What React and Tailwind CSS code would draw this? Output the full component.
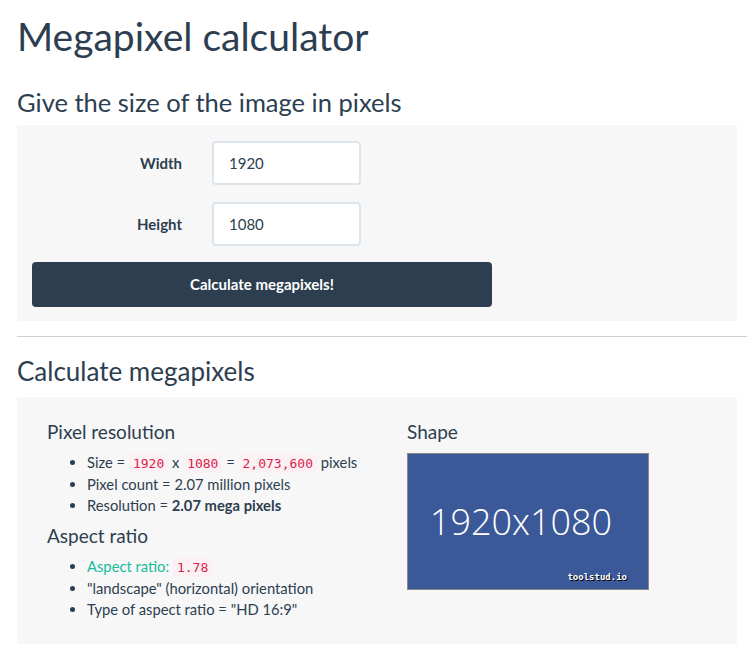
import React, { useState } from 'react';

const Code = ({ children }) => (
  <code className="rounded-[4px] bg-[#fbf0f3] px-[4px] py-[2px] font-['DejaVu_Sans_Mono',monospace] text-[13px] text-[#dc1d4b]">
    {children}
  </code>
);

export default function App() {
  const [width, setWidth] = useState('1920');
  const [height, setHeight] = useState('1080');

  return (
    <div className="min-h-screen bg-white font-['Lato','Open_Sans',sans-serif] text-[#2c3e50]">
      <div className="pl-[17px]">
        <h1 className="pt-[12px] text-[39px] leading-[48px]">Megapixel calculator</h1>
        <h3 className="mt-[26px] text-[25.5px] leading-[32px]">Give the size of the image in pixels</h3>

        {/* input panel */}
        <div className="mr-[10px] mt-[7px] bg-[#f7f7f7] pb-[14px] pt-[16px]">
          <div className="flex items-center">
            <label className="w-[180px] pr-[15px] text-right text-[15px] font-bold">Width</label>
            <input
              value={width}
              onChange={(e) => setWidth(e.target.value)}
              className="ml-[15px] h-[44px] w-[149px] rounded-[4px] border-2 border-[#dce4ec] bg-white px-[15px] text-[15px] text-[#2c3e50] outline-none"
            />
          </div>
          <div className="mt-[17px] flex items-center">
            <label className="w-[180px] pr-[15px] text-right text-[15px] font-bold">Height</label>
            <input
              value={height}
              onChange={(e) => setHeight(e.target.value)}
              className="ml-[15px] h-[44px] w-[149px] rounded-[4px] border-2 border-[#dce4ec] bg-white px-[15px] text-[15px] text-[#2c3e50] outline-none"
            />
          </div>
          <button className="ml-[15px] mt-[16px] h-[45px] w-[460px] rounded-[4px] bg-[#2c3e50] text-[15px] font-bold text-white">
            Calculate megapixels!
          </button>
        </div>

        <hr className="mt-[15px] border-t border-[#d0d0d0]" />

        <h3 className="mt-[18px] text-[26px] leading-[32px]">Calculate megapixels</h3>

        {/* results panel */}
        <div className="mr-[10px] mt-[10px] grid grid-cols-2 bg-[#f7f7f7] pb-[24px] pt-[23px]">
          <div className="pl-[30px]">
            <h4 className="text-[19px] leading-[24px]">Pixel resolution</h4>
            <ul className="mt-[8px] list-disc pl-[40px] text-[14.75px] leading-[21px]">
              <li>
                Size = <Code>1920</Code> x <Code>1080</Code> = <Code>2,073,600</Code> pixels
              </li>
              <li>Pixel count = 2.07 million pixels</li>
              <li>
                Resolution = <b>2.07 mega pixels</b>
              </li>
            </ul>
            <h4 className="mt-[8px] text-[19px] leading-[24px]">Aspect ratio</h4>
            <ul className="mt-[8px] list-disc pl-[40px] text-[14.75px] leading-[21px]">
              <li>
                <span className="text-[#18bc9c]">Aspect ratio: </span>
                <Code>1.78</Code>
              </li>
              <li>"landscape" (horizontal) orientation</li>
              <li>Type of aspect ratio = "HD 16:9"</li>
            </ul>
          </div>
          <div className="pl-[30px]">
            <h4 className="text-[19px] leading-[24px]">Shape</h4>
            <div className="relative mt-[9px] flex h-[137px] w-[242px] items-center justify-center border border-[#8a8a8a] bg-[#3b5998] pr-[14px]">
              <span className="font-['Open_Sans',sans-serif] text-[36px] font-light text-white">1920x1080</span>
              <span className="absolute bottom-[5px] right-[21px] font-['DejaVu_Sans_Mono',monospace] text-[9px] font-bold text-white [text-shadow:1px_1px_0_#000]">
                toolstud.io
              </span>
            </div>
          </div>
        </div>
      </div>
    </div>
  );
}
